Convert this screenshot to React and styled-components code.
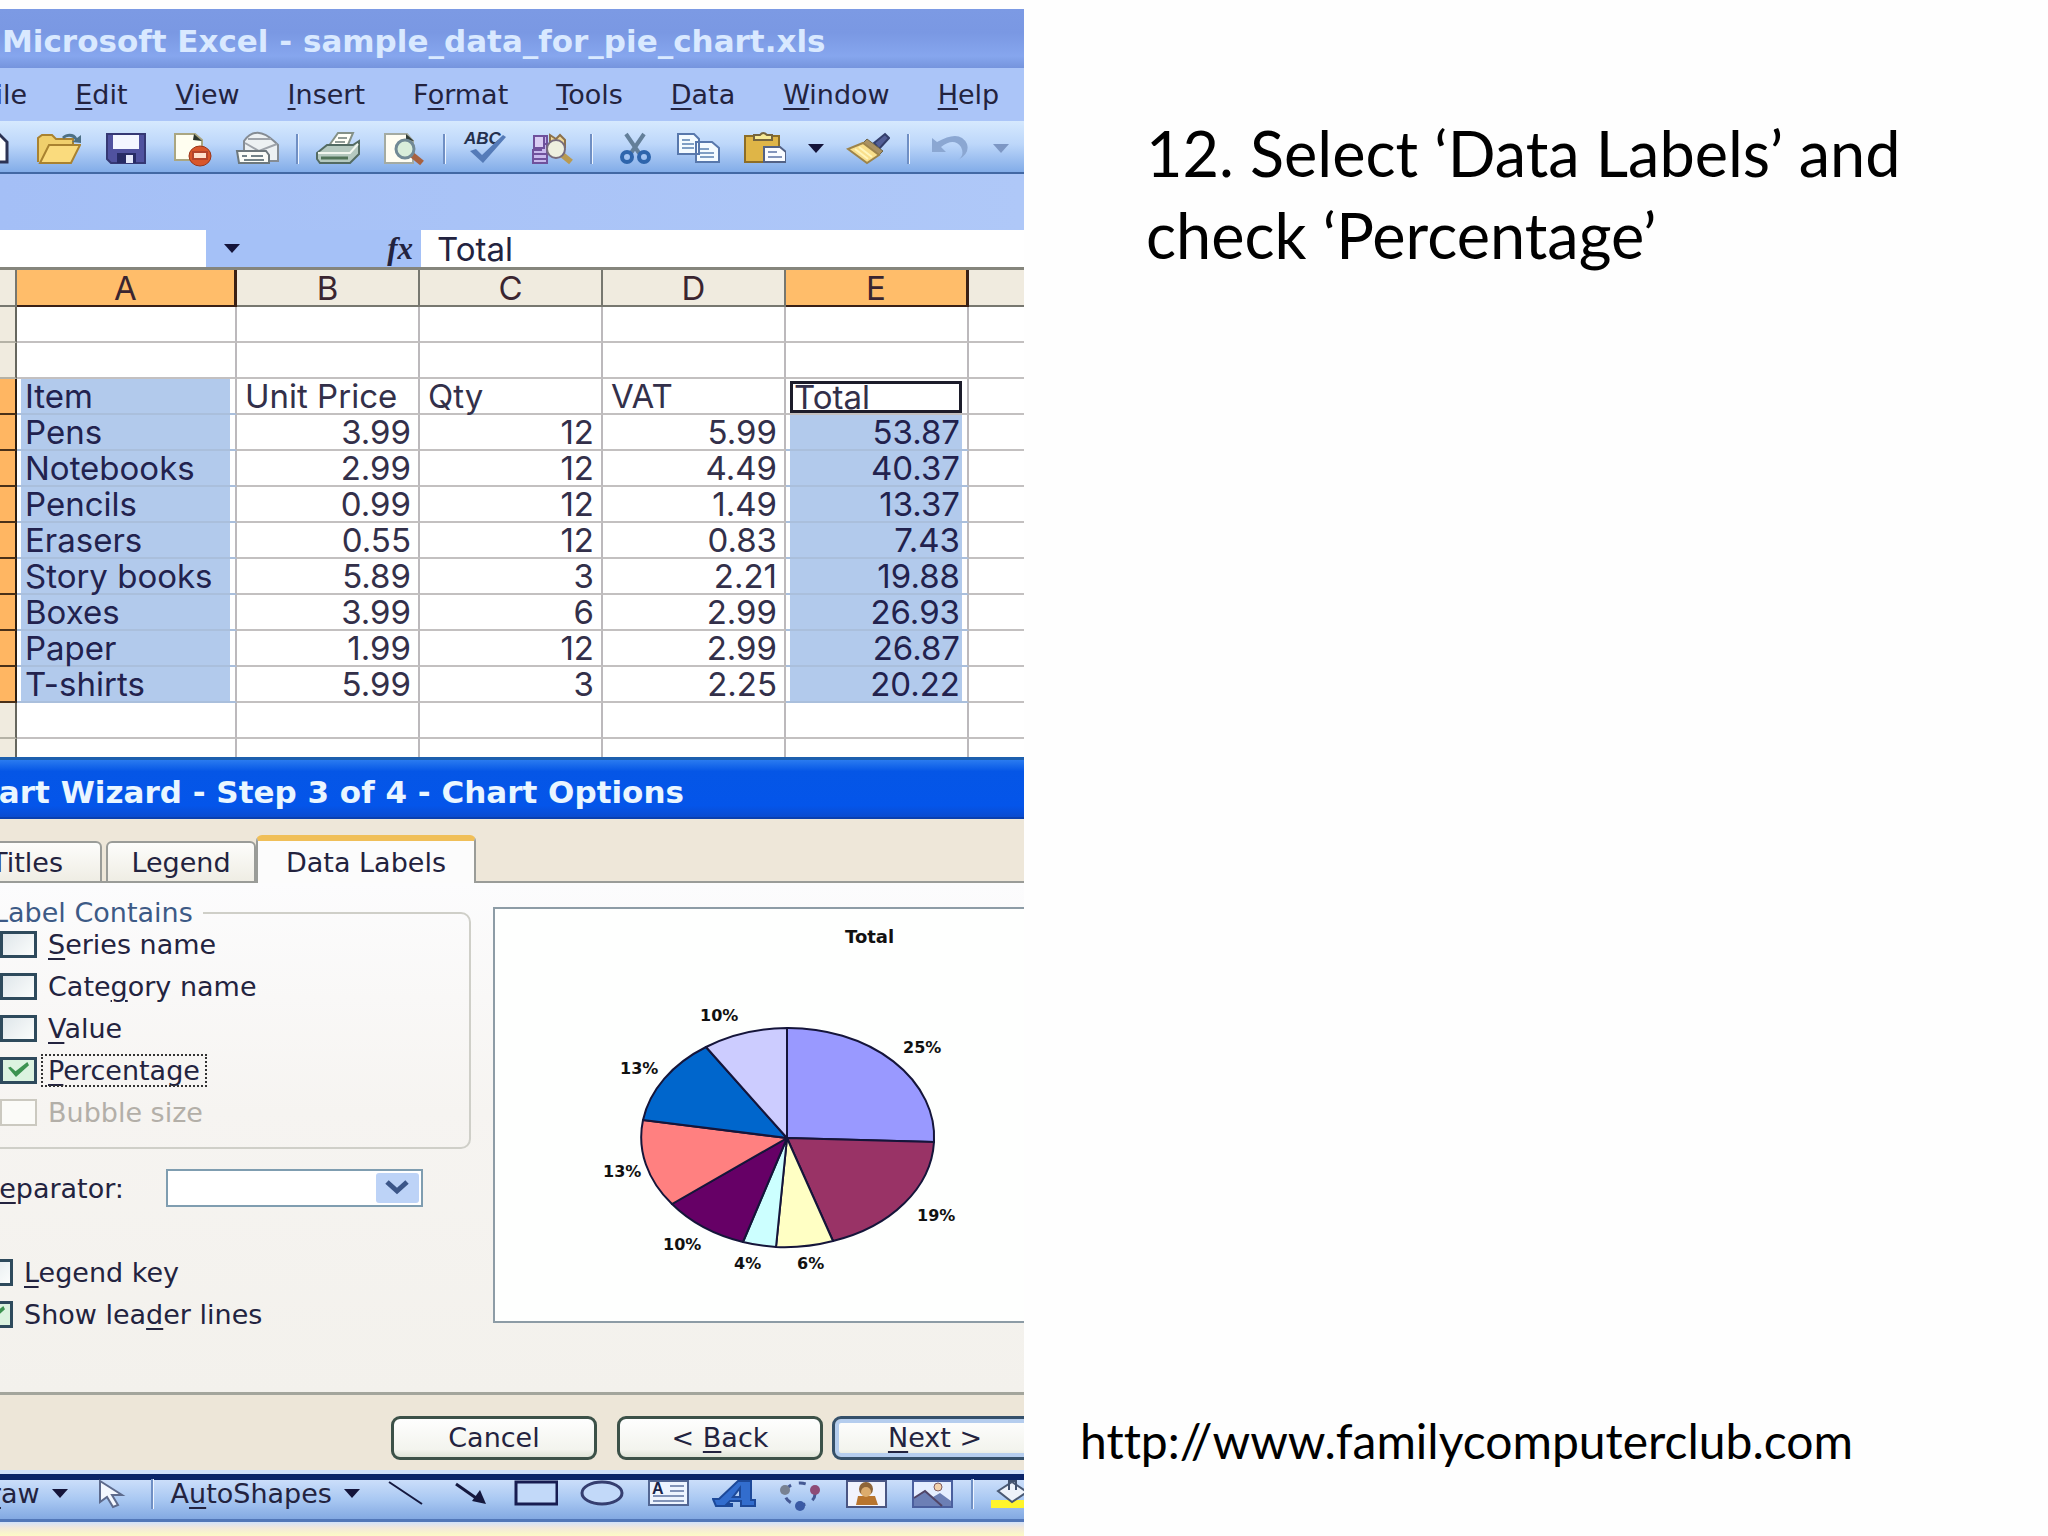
import React from "react";
import styled, { createGlobalStyle, css } from "styled-components";

const GlobalStyle = createGlobalStyle`
  * {
    box-sizing: border-box;
  }

  body {
    margin: 0;
    background: #fefefe;
    font-family: "DejaVu Sans", sans-serif;
    font-size: 27px;
    color: #23233f;
  }

  button, input, select {
    font: inherit;
    color: inherit;
  }

  u {
    text-decoration-thickness: 2px;
    text-underline-offset: 4px;
  }
`;

const Slide = styled.main`
  display: grid;
  grid-template-columns: minmax(0, 1fr) minmax(0, 1fr);
  min-height: 100vh;
`;

const Screen = styled.section`
  display: flex;
  flex-direction: column;
  margin-top: 9px;
  background: #cfe0fb;
  overflow: hidden;
`;

const Notes = styled.section`
  display: flex;
  flex-direction: column;
  justify-content: space-between;
  padding: 112px 54px 64px 56px;
  font-family: Lato, sans-serif;
  color: #000;
`;

const Instruction = styled.h1`
  margin: 0;
  padding-left: 66px;
  font-size: 63px;
  font-weight: 400;
  line-height: 82px;
`;

const SiteLink = styled.a`
  font-size: 48px;
  font-variant-ligatures: none;
  line-height: 62px;
  color: inherit;
  text-decoration: none;
`;

/* Excel window */

const TitleBar = styled.header`
  display: flex;
  align-items: center;
  height: 59px;
  padding: 5px 2px 0;
  background: linear-gradient(#7c9ae4, #7a98e3 40%, #86a6ee 80%, #7594dd);
  color: #d9e9ff;
  font-size: 31px;
  font-weight: 700;
  white-space: nowrap;
`;

const MenuBar = styled.nav`
  display: flex;
  align-items: center;
  gap: 48px;
  height: 53px;
  margin-left: -18px;
  background: #abc5f8;
`;

const PlainButton = styled.button`
  display: flex;
  flex: none;
  align-items: center;
  gap: 12px;
  padding: 0;
  border: 0;
  background: none;
  white-space: nowrap;
`;

const MenuButton = styled(PlainButton)`
  display: block;
`;

const Toolbar = styled.div`
  display: flex;
  align-items: center;
  gap: 22px;
  height: 53px;
  padding-top: 4px;
  border-bottom: 2px solid #4268a4;
  background: linear-gradient(#d6e9fe, #bdd7fa 45%, #82ace8);

  > :first-child {
    margin-left: -29px;
  }
`;

const ToolSeparator = styled.span`
  flex: none;
  width: 3px;
  height: 30px;
  margin: 0 -5px;
  border-left: 2px solid #6f8fc4;
  border-right: 1px solid #eef5ff;
`;

const Band = styled.div`
  height: 56px;
  background: linear-gradient(90deg, #a4bff6, #afc8f8);
`;

const FormulaBar = styled.div`
  display: flex;
  align-items: stretch;
  height: 37px;
  background: #a5c1f7;
`;

const NameBox = styled.input`
  width: 206px;
  padding: 0 8px;
  border: 0;
  background: #fff;
`;

const FormulaTools = styled.div`
  display: flex;
  flex: none;
  align-items: center;
  justify-content: space-between;
  width: 215px;
  padding: 0 8px 0 16px;
`;

const FxButton = styled(PlainButton)`
  font-family: "Liberation Serif", serif;
  font-size: 31px;
  font-style: italic;
  font-weight: 700;
  line-height: 30px;
`;

const FormulaInput = styled.input`
  flex: 1;
  min-width: 0;
  padding: 0 16px;
  border: 0;
  background: #fff;
  font-family: Inter, sans-serif;
  font-size: 33px;
`;

const SheetView = styled.div`
  height: 490px;
  overflow: hidden;
`;

const Sheet = styled.table`
  width: 100%;
  table-layout: fixed;
  border-top: 3px solid #85857c;
  border-collapse: separate;
  border-spacing: 0;
  background: #fff;
  font-family: Inter, sans-serif;
  font-size: 33px;
  line-height: 34px;

  th,
  td {
    height: 36px;
  }

  tr > :last-child {
    border-right: 0;
  }
`;

const Col = styled.col`
  width: ${(p) => p.$width};
`;

const ColumnHead = styled.th`
  padding: 1px 0 0;
  border-right: 2px solid #77776f;
  border-bottom: 2px solid #77776f;
  background: #f0ebdf;
  color: #3a2530;
  font-weight: 400;

  ${(p) =>
    p.$active &&
    css`
      border-right: 3px solid #3a2015;
      border-bottom-color: #3a2015;
      background: #ffbd6a;
    `}
`;

const RowHead = styled.th`
  padding: 0;
  border-right: 2px solid #66665e;
  border-bottom: 2px solid #b5b2a6;
  background: #f0ebdf;

  ${(p) =>
    p.$active &&
    css`
      border-right-color: #2a1c10;
      border-bottom-color: #4a3018;
      background: #ffb662;
    `}
`;

const Cell = styled.td`
  padding: 0 7px 0 8px;
  border-right: 2px solid #bcb9bc;
  border-bottom: 2px solid #c3c0c0;
  color: #33304a;
  text-align: ${(p) => (p.$right ? "right" : "left")};
  white-space: nowrap;

  ${(p) =>
    p.$selected &&
    css`
      border-bottom-color: #aabfdc;
      background: linear-gradient(#b2caec, #b2caec) 4px 0 / calc(100% - 9px)
        100% no-repeat;
      color: #22224e;
    `}
`;

const ActiveCell = styled(Cell)`
  padding: 2px 5px 0 4px;
`;

const ActiveFrame = styled.div`
  height: 32px;
  padding-left: 1px;
  border: 3px solid #1c1c2a;
  line-height: 26px;
`;

/* Chart wizard */

const DialogTitle = styled.h2`
  display: flex;
  align-items: center;
  height: 62px;
  margin: 0;
  padding-top: 6px;
  border-top: 3px solid #1d5fae;
  border-bottom: 2px solid #0a3fae;
  background: linear-gradient(#2a7bf0, #0556e6 20%, #0455ea 80%, #0a4bd0);
  color: #eaf6ff;
  font-size: 31px;
  font-weight: 700;
  white-space: nowrap;

  span {
    margin-left: -46px;
  }
`;

const TabStrip = styled.div`
  display: flex;
  align-items: flex-end;
  gap: 4px;
  height: 64px;
  background: #eee7d9;
  box-shadow: inset 0 -2px #9a9c98;

  > :first-child {
    margin-left: -48px;
  }
`;

const Tab = styled.button`
  min-width: 150px;
  height: 42px;
  padding: 0 23px;
  border: 2px solid #9a9c98;
  border-radius: 6px 6px 0 0;
  background: linear-gradient(#fdfdfb, #efede4);
  white-space: nowrap;

  ${(p) =>
    p.$active &&
    css`
      height: 48px;
      margin-left: -4px;
      padding: 0 28px;
      border-top: 6px solid #f0bf58;
      border-bottom: 0;
      background: #fcfcfc;
    `}
`;

const TabPanel = styled.div`
  display: grid;
  grid-template-columns: 471px minmax(0, 1fr);
  gap: 22px;
  height: 512px;
  border-bottom: 3px solid #a3a59c;
  background: linear-gradient(#fcfcfd, #f6f4f1 45%, #f3f1ec);
`;

const Options = styled.div`
  display: flex;
  flex-direction: column;
  padding-top: 14px;
`;

const LabelGroup = styled.fieldset`
  height: 252px;
  min-width: 0;
  margin: 0 0 0 -20px;
  padding: 2px 0 0 18px;
  border: 2px solid #cfcfc8;
  border-radius: 10px;
`;

const GroupTitle = styled.legend`
  height: 32px;
  margin-left: -7px;
  padding: 0 10px 0 0;
  color: #3d5a86;
  line-height: 32px;
`;

const CheckList = styled.div`
  display: flex;
  flex-direction: column;
  gap: 15px;
`;

const CheckRow = styled.label`
  display: flex;
  align-items: center;
  gap: 11px;
  height: 27px;
  color: ${(p) => (p.$disabled ? "#b3afa8" : "inherit")};
  line-height: 27px;
  white-space: nowrap;
`;

const CheckInput = styled.input`
  appearance: none;
  flex: none;
  width: 37px;
  height: 27px;
  margin: 0;
  border: 3px solid #2e4a5c;
  background: linear-gradient(135deg, #dfe6ea, #fbfdfc);

  &:checked {
    background: #dcf3e0;
  }

  &:checked::after {
    content: "";
    display: block;
    width: 21px;
    height: 15px;
    margin: 2px auto 0;
    background: #3c9350;
    clip-path: polygon(0 38%, 12% 32%, 36% 62%, 92% 0, 100% 22%, 38% 100%);
  }

  &:disabled {
    border: 2px solid #cbc9c0;
    background: #fbfbf8;
  }
`;

const CheckText = styled.span`
  ${(p) =>
    p.$focused &&
    css`
      padding: 0 4px;
      margin-left: -4px;
      outline: 2px dotted #333;
      outline-offset: 1px;
    `}
`;

const SeparatorRow = styled.div`
  display: flex;
  align-items: center;
  justify-content: space-between;
  margin: 20px 48px 52px -18px;
`;

const SelectBox = styled.div`
  position: relative;
  width: 257px;
  height: 38px;

  svg {
    position: absolute;
    top: 4px;
    right: 4px;
    pointer-events: none;
  }
`;

const Select = styled.select`
  appearance: none;
  width: 100%;
  height: 100%;
  border: 2px solid #7f9db0;
  background: #fff;
`;

const ExtraChecks = styled(CheckList)`
  margin-left: -24px;
`;

const Preview = styled.figure`
  height: 416px;
  margin: 24px 0 0;
  border: 2px solid #8d9ca6;
  border-right: 0;
  background: #fefffe;
  overflow: hidden;

  svg {
    display: block;
  }

  text {
    font-family: "DejaVu Sans", sans-serif;
    font-size: 16px;
    font-weight: 700;
    fill: #111;
  }
`;

const DialogFooter = styled.div`
  display: flex;
  align-items: center;
  justify-content: flex-end;
  gap: 20px;
  height: 75px;
  margin-right: -14px;
  padding-top: 10px;
  background: #ede6d8;
`;

const DialogButton = styled.button`
  flex: none;
  width: 206px;
  height: 44px;
  border: 3px solid #3c5148;
  border-radius: 9px;
  background: linear-gradient(#fefefe, #f3f4ee 80%, #dfe4d8);
  white-space: nowrap;

  ${(p) =>
    p.$primary &&
    css`
      margin-left: -11px;
      border-color: #35506a;
      box-shadow: inset 0 0 0 4px #b5cdee;
    `}
`;

const DrawBar = styled(Toolbar)`
  height: 48px;
  margin-top: 4px;
  padding: 0 0 12px;
  border-top: 6px solid #0a2468;
  border-bottom: 3px solid #5277b8;
  background: linear-gradient(#cbdefa, #a9c8f2 50%, #83a9e2);

  > :first-child {
    margin-left: -31px;
  }
`;

const StatusEdge = styled.div`
  flex: 1;
  min-height: 14px;
  background: linear-gradient(#d3e1f8, #f1e8dc 40%, #fdfbc4);
`;

function Icon({ children }) {
  return (
    <svg width="44" height="36" viewBox="0 0 44 36" aria-hidden="true">
      {children}
    </svg>
  );
}

function Caret({ color = "#14143a", width = 16 }) {
  return (
    <svg width={width} height="9" viewBox="0 0 16 9" aria-hidden="true">
      <path d="M0 0h16L8 9z" fill={color} />
    </svg>
  );
}

const icons = {
  new: <path d="M4 3h24l8 8v20H4z" fill="#fff" stroke="#2c3354" strokeWidth="3" />,
  open: (
    <>
      <path d="M1 31V7l4-3h10l4 4h17v7" fill="#f0cf6c" stroke="#a98230" strokeWidth="2" />
      <path d="M25 6c5-5 13-4 15 1l4-3v8l-9-1 3-2c-3-4-8-4-11-1z" fill="#4d7085" />
      <path d="M3 32l9-18h31l-9 18z" fill="#fadb7d" stroke="#a98230" strokeWidth="2" />
    </>
  ),
  save: (
    <>
      <path d="M4 3h38v29H8l-4-4z" fill="#50529f" stroke="#353874" strokeWidth="2" />
      <path d="M10 4h26v14H10z" fill="#f3f6ff" />
      <path d="M14 22h19v10H14z" fill="#272b65" />
      <path d="M23 24h7v8h-7z" fill="#e4e8fa" />
    </>
  ),
  permission: (
    <>
      <path d="M6 3h20l7 6v20H6z" fill="#fffef0" stroke="#aaa681" strokeWidth="2" />
      <path d="M25 3l8 7-9-1z" fill="#2c352b" />
      <ellipse cx="31" cy="25" rx="11" ry="10" fill="#d8562b" stroke="#9b3518" />
      <path d="M24 21h14v7H24z" fill="#ffe0cc" stroke="#b4442b" strokeWidth="2" />
    </>
  ),
  mail: (
    <>
      <path d="M9 22V10q12-17 31 1l3 3v16H28" fill="#edf1f3" stroke="#858c94" strokeWidth="2" />
      <path d="M10 12l14 8 18-7M13 8h23" fill="none" stroke="#9ea3aa" strokeWidth="2" />
      <path d="M2 20h29l3 4v8H4z" fill="#fafcf7" stroke="#6d787c" strokeWidth="2" />
      <path d="M7 25h5M16 25h12M9 29h20" stroke="#718187" strokeWidth="2" />
    </>
  ),
  print: (
    <>
      <path d="M12 16L22 2h15l-6 14z" fill="#fffff7" stroke="#849187" strokeWidth="2" />
      <path d="M22 7h9M19 11h10" stroke="#919c96" strokeWidth="2" />
      <path d="M1 22l10-8h26l6-4v13l-9 9H4l-3-4z" fill="#b5c9bf" stroke="#536b62" strokeWidth="2" />
      <path d="M2 22h32l8-9" fill="none" stroke="#f2f7ef" strokeWidth="2" />
      <path d="M5 27h27" stroke="#517458" strokeWidth="3" />
    </>
  ),
  preview: (
    <>
      <path d="M3 3h22l6 7v22H3z" fill="#fffdf2" stroke="#a4aba2" strokeWidth="2" />
      <path d="M24 3l8 7-8-1z" fill="#303b35" />
      <path d="M29 23l11 9" stroke="#a8613f" strokeWidth="6" />
      <circle cx="23" cy="18" r="9" fill="#d9edda" stroke="#718995" strokeWidth="3" />
    </>
  ),
  spelling: (
    <>
      <text x="1" y="13" fontFamily="Liberation Sans" fontSize="17" fontWeight="700" fontStyle="italic" fill="#24304d">
        ABC
      </text>
      <path d="M7 20l6-2 6 6L40 4l3 2-23 26z" fill="#557bb8" />
    </>
  ),
  research: (
    <>
      <path d="M4 32V19h8V5h6v27zM3 23h14M3 28h14M7 13h10" fill="#c8b9ed" stroke="#6f519c" strokeWidth="2" />
      <path d="M5 5h10v12H5z" fill="#d9cdf3" stroke="#6f519c" strokeWidth="2" />
      <path d="M21 14V4l6 4 4-4 5 5v8" fill="#efd899" stroke="#8c714b" strokeWidth="2" />
      <path d="M31 22l11 9" stroke="#b99a51" strokeWidth="6" />
      <circle cx="27" cy="18" r="9" fill="#eef0df" stroke="#776c7c" strokeWidth="2" />
    </>
  ),
  cut: (
    <>
      <path d="M16 3l13 19M34 3L21 22" stroke="#637f99" strokeWidth="4" />
      <ellipse cx="17" cy="26" rx="5" ry="5" fill="none" stroke="#2e65ac" strokeWidth="4" />
      <ellipse cx="34" cy="26" rx="5" ry="5" fill="none" stroke="#2e65ac" strokeWidth="4" />
    </>
  ),
  copy: (
    <>
      <path d="M2 3h16l5 5v15H2zM20 11h16l7 6v14H20z" fill="#f4fbff" stroke="#5878ac" strokeWidth="2" />
      <path d="M6 9h8M6 13h12M6 17h12M24 18h9M24 22h14M24 26h14" stroke="#809fc4" strokeWidth="2" />
    </>
  ),
  paste: (
    <>
      <path d="M3 5h34v26H3z" fill="#dfb547" stroke="#8c6d27" strokeWidth="2" />
      <path d="M12 9V4h6q3-4 7 0h5v5z" fill="#f7e995" stroke="#75643e" strokeWidth="2" />
      <path d="M22 16h16l6 5v10H22z" fill="#fafcff" stroke="#536285" strokeWidth="2" />
      <path d="M26 21h9M26 26h14" stroke="#8495bb" strokeWidth="2" />
    </>
  ),
  painter: (
    <>
      <path d="M28 12L39 3l4 4-10 11z" fill="#535f97" stroke="#333e6b" strokeWidth="2" />
      <path d="M21 8l16 12-4 4L17 12z" fill="#aa9162" stroke="#6c6449" />
      <path d="M17 12l16 12-12 8L2 18z" fill="#f9df8c" stroke="#9d844b" strokeWidth="2" />
      <path d="M9 18l13 10M13 16l13 10" stroke="#fff5bc" strokeWidth="2" />
    </>
  ),
  undo: <path d="M5 7v14h14l-5-5q13-10 20 0 4 8-3 13 12-6 9-16Q33-2 10 11z" fill="#8ba7d2" />,
};

const drawIcons = {
  pointer: <path d="M10 5v21l7-5 6 10 5-2-6-10h10z" fill="#f4f8ff" stroke="#5d6a8c" strokeWidth="2" />,
  line: <path d="M7 6l33 22" stroke="#14183e" strokeWidth="2" />,
  arrow: (
    <>
      <path d="M8 8l20 14" stroke="#14183e" strokeWidth="3" />
      <path d="M24 25l8-11 6 14z" fill="#14183e" />
    </>
  ),
  rectangle: <path d="M2 6h41v22H2z" fill="#c2d9f9" stroke="#171c51" strokeWidth="3" />,
  oval: <ellipse cx="22" cy="17" rx="20" ry="11" fill="#c2d9f9" stroke="#353e70" strokeWidth="3" />,
  textBox: (
    <>
      <path d="M3 5h39v24H3z" fill="#edf4ff" stroke="#526693" strokeWidth="2" />
      <text x="6" y="18" fontFamily="Liberation Sans" fontSize="16" fontWeight="700" fill="#172348">
        A
      </text>
      <path d="M24 10h14M24 15h14M7 20h31M7 25h31" stroke="#8193b8" strokeWidth="2" />
    </>
  ),
  wordArt: (
    <path
      d="M1 23h6L26 5h13v19h4v6H29v-5H18l-3 3h5v2H4zM21 21h7v-9z"
      fill="#326dce"
      stroke="#1d4999"
      strokeWidth="2"
      fillRule="evenodd"
    />
  ),
  diagram: (
    <>
      <ellipse cx="22" cy="18" rx="15" ry="11" fill="none" stroke="#455994" strokeWidth="3" strokeDasharray="7 8" />
      <circle cx="7" cy="14" r="5" fill="#788292" />
      <circle cx="37" cy="14" r="5" fill="#8e4b76" />
      <circle cx="22" cy="30" r="5" fill="#3a5aa5" />
    </>
  ),
  clipArt: (
    <>
      <path d="M3 5h39v26H3z" fill="#f1f3fc" stroke="#4a5683" strokeWidth="2" />
      <path d="M12 29l2-9h17l3 9z" fill="#b8752e" />
      <circle cx="22" cy="13" r="7" fill="#8e6538" />
      <ellipse cx="22" cy="16" rx="5" ry="5" fill="#dcac6d" />
    </>
  ),
  picture: (
    <>
      <path d="M3 5h39v26H3z" fill="#e5eeff" stroke="#4a5f9e" strokeWidth="2" />
      <path d="M4 22l11-7 8 6 7-4 11 8v5H4z" fill="#6c7fb5" />
      <path d="M4 22l11-7 17 15" fill="none" stroke="#514566" strokeWidth="2" />
      <circle cx="28" cy="11" r="4" fill="#f3d1aa" stroke="#805c61" />
    </>
  ),
  fill: (
    <>
      <path d="M0 24h44v8H0z" fill="#fff52c" />
      <path d="M7 15L21 6l15 10-15 10z" fill="#edf2fa" stroke="#4a5973" strokeWidth="2" />
      <path d="M18 14V5h7v9" fill="none" stroke="#40516e" strokeWidth="2" />
    </>
  ),
};

function ToolButton({ name, icon }) {
  return (
    <PlainButton type="button" aria-label={name}>
      <Icon>{icon}</Icon>
    </PlainButton>
  );
}

function Check({ text, focused, ...rest }) {
  return (
    <CheckRow $disabled={rest.disabled}>
      <CheckInput type="checkbox" {...rest} />
      <CheckText $focused={focused}>{text}</CheckText>
    </CheckRow>
  );
}

const menus = [
  <><u>F</u>ile</>,
  <><u>E</u>dit</>,
  <><u>V</u>iew</>,
  <><u>I</u>nsert</>,
  <>F<u>o</u>rmat</>,
  <><u>T</u>ools</>,
  <><u>D</u>ata</>,
  <><u>W</u>indow</>,
  <><u>H</u>elp</>,
];

const columns = ["A", "B", "C", "D", "E", ""];

const items = [
  ["Pens", "3.99", "12", "5.99", "53.87"],
  ["Notebooks", "2.99", "12", "4.49", "40.37"],
  ["Pencils", "0.99", "12", "1.49", "13.37"],
  ["Erasers", "0.55", "12", "0.83", "7.43"],
  ["Story books", "5.89", "3", "2.21", "19.88"],
  ["Boxes", "3.99", "6", "2.99", "26.93"],
  ["Paper", "1.99", "12", "2.99", "26.87"],
  ["T-shirts", "5.99", "3", "2.25", "20.22"],
];

// slice edges run clockwise from twelve o'clock
const slices = [
  { color: "#9999ff", from: [292, 119], to: [439, 233], label: "25%", x: 408, y: 144 },
  { color: "#993366", from: [439, 233], to: [338, 332], label: "19%", x: 422, y: 312 },
  { color: "#ffffc4", from: [338, 332], to: [281, 338], label: "6%", x: 302, y: 360 },
  { color: "#ccffff", from: [281, 338], to: [248, 333], label: "4%", x: 239, y: 360 },
  { color: "#660066", from: [248, 333], to: [177, 295], label: "10%", x: 168, y: 341 },
  { color: "#ff8080", from: [177, 295], to: [148, 211], label: "13%", x: 108, y: 268 },
  { color: "#0066cc", from: [148, 211], to: [211, 138], label: "13%", x: 125, y: 165 },
  { color: "#ccccff", from: [211, 138], to: [292, 119], label: "10%", x: 205, y: 112 },
];

function BlankRow() {
  return (
    <tr>
      <RowHead />
      {columns.map((_, i) => (
        <Cell key={i} />
      ))}
    </tr>
  );
}

function Spreadsheet() {
  return (
    <SheetView>
      <Sheet>
        <colgroup>
          <Col $width="17px" />
          <Col $width="220px" />
          <Col $width="183px" />
          <Col $width="183px" />
          <Col $width="183px" />
          <Col $width="183px" />
          <Col $width="auto" />
        </colgroup>
        <thead>
          <tr>
            <ColumnHead />
            {columns.map((name) => (
              <ColumnHead key={name} scope="col" $active={name === "A" || name === "E"}>
                {name}
              </ColumnHead>
            ))}
          </tr>
        </thead>
        <tbody>
          <BlankRow />
          <BlankRow />
          <tr>
            <RowHead $active />
            <Cell $selected>Item</Cell>
            <Cell>Unit Price</Cell>
            <Cell>Qty</Cell>
            <Cell>VAT</Cell>
            <ActiveCell>
              <ActiveFrame>Total</ActiveFrame>
            </ActiveCell>
            <Cell />
          </tr>
          {items.map(([item, price, qty, vat, total]) => (
            <tr key={item}>
              <RowHead $active />
              <Cell $selected>{item}</Cell>
              <Cell $right>{price}</Cell>
              <Cell $right>{qty}</Cell>
              <Cell $right>{vat}</Cell>
              <Cell $right $selected>{total}</Cell>
              <Cell />
            </tr>
          ))}
          <BlankRow />
          <BlankRow />
        </tbody>
      </Sheet>
    </SheetView>
  );
}

function PieChart() {
  return (
    <Preview>
      <svg width="529" height="412" viewBox="0 0 529 412" role="img" aria-label="Total">
        <text x="350" y="34" style={{ fontSize: 18 }}>Total</text>
        {slices.map((s) => (
          <path
            key={s.color}
            d={`M292 229L${s.from.join(" ")}A146 109 0 0 1 ${s.to.join(" ")}Z`}
            fill={s.color}
            stroke="#15153a"
            strokeWidth="2"
            strokeLinejoin="round"
          />
        ))}
        {slices.map((s) => (
          <text key={s.color} x={s.x} y={s.y}>{s.label}</text>
        ))}
      </svg>
    </Preview>
  );
}

function ChartWizard() {
  return (
    <>
      <DialogTitle>
        <span>Chart Wizard - Step 3 of 4 - Chart Options</span>
      </DialogTitle>
      <TabStrip role="tablist">
        <Tab type="button" role="tab">Titles</Tab>
        <Tab type="button" role="tab">Legend</Tab>
        <Tab type="button" role="tab" aria-selected="true" $active>Data Labels</Tab>
      </TabStrip>
      <TabPanel role="tabpanel">
        <Options>
          <LabelGroup>
            <GroupTitle>Label Contains</GroupTitle>
            <CheckList>
              <Check text={<><u>S</u>eries name</>} />
              <Check text={<>Cate<u>g</u>ory name</>} />
              <Check text={<><u>V</u>alue</>} />
              <Check text={<><u>P</u>ercentage</>} defaultChecked focused />
              <Check text="Bubble size" disabled />
            </CheckList>
          </LabelGroup>
          <SeparatorRow>
            <label htmlFor="separator">S<u>e</u>parator:</label>
            <SelectBox>
              <Select id="separator" defaultValue="">
                <option value="" aria-label="None" />
              </Select>
              <svg width="43" height="30" viewBox="0 0 43 30" aria-hidden="true">
                <rect width="43" height="30" rx="3" fill="#bdd3f7" />
                <path d="M11 9l10 9 10-9" fill="none" stroke="#3c5688" strokeWidth="5" />
              </svg>
            </SelectBox>
          </SeparatorRow>
          <ExtraChecks>
            <Check text={<><u>L</u>egend key</>} />
            <Check text={<>Show lea<u>d</u>er lines</>} defaultChecked />
          </ExtraChecks>
        </Options>
        <PieChart />
      </TabPanel>
      <DialogFooter>
        <DialogButton type="button">Cancel</DialogButton>
        <DialogButton type="button">&lt; <u>B</u>ack</DialogButton>
        <DialogButton type="button" $primary><u>N</u>ext &gt;</DialogButton>
      </DialogFooter>
    </>
  );
}

function App() {
  return (
    <>
      <GlobalStyle />
      <Slide>
        <Screen>
          <TitleBar>Microsoft Excel - sample_data_for_pie_chart.xls</TitleBar>
          <MenuBar>
            {menus.map((menu, i) => (
              <MenuButton key={i} type="button">{menu}</MenuButton>
            ))}
          </MenuBar>
          <Toolbar>
            <ToolButton name="New" icon={icons.new} />
            <ToolButton name="Open" icon={icons.open} />
            <ToolButton name="Save" icon={icons.save} />
            <ToolButton name="Permission" icon={icons.permission} />
            <ToolButton name="E-mail" icon={icons.mail} />
            <ToolSeparator />
            <ToolButton name="Print" icon={icons.print} />
            <ToolButton name="Print preview" icon={icons.preview} />
            <ToolSeparator />
            <ToolButton name="Spelling" icon={icons.spelling} />
            <ToolButton name="Research" icon={icons.research} />
            <ToolSeparator />
            <ToolButton name="Cut" icon={icons.cut} />
            <ToolButton name="Copy" icon={icons.copy} />
            <ToolButton name="Paste" icon={icons.paste} />
            <PlainButton type="button" aria-label="Paste options"><Caret /></PlainButton>
            <ToolButton name="Format painter" icon={icons.painter} />
            <ToolSeparator />
            <ToolButton name="Undo" icon={icons.undo} />
            <PlainButton type="button" aria-label="Undo options"><Caret color="#7d97c4" /></PlainButton>
          </Toolbar>
          <Band />
          <FormulaBar>
            <NameBox aria-label="Name box" />
            <FormulaTools>
              <PlainButton type="button" aria-label="Names"><Caret width={20} /></PlainButton>
              <FxButton type="button">fx</FxButton>
            </FormulaTools>
            <FormulaInput aria-label="Formula" defaultValue="Total" />
          </FormulaBar>
          <Spreadsheet />
          <ChartWizard />
          <DrawBar>
            <PlainButton type="button"><span>D<u>r</u>aw</span><Caret /></PlainButton>
            <ToolButton name="Select objects" icon={drawIcons.pointer} />
            <ToolSeparator />
            <PlainButton type="button"><span>A<u>u</u>toShapes</span><Caret /></PlainButton>
            <ToolButton name="Line" icon={drawIcons.line} />
            <ToolButton name="Arrow" icon={drawIcons.arrow} />
            <ToolButton name="Rectangle" icon={drawIcons.rectangle} />
            <ToolButton name="Oval" icon={drawIcons.oval} />
            <ToolButton name="Text box" icon={drawIcons.textBox} />
            <ToolButton name="WordArt" icon={drawIcons.wordArt} />
            <ToolButton name="Diagram" icon={drawIcons.diagram} />
            <ToolButton name="Clip art" icon={drawIcons.clipArt} />
            <ToolButton name="Picture" icon={drawIcons.picture} />
            <ToolSeparator />
            <ToolButton name="Fill color" icon={drawIcons.fill} />
          </DrawBar>
          <StatusEdge />
        </Screen>
        <Notes>
          <Instruction>12. Select ‘Data Labels’ and check ‘Percentage’</Instruction>
          <SiteLink href="http://www.familycomputerclub.com">http://www.familycomputerclub.com</SiteLink>
        </Notes>
      </Slide>
    </>
  );
}

export default App;
